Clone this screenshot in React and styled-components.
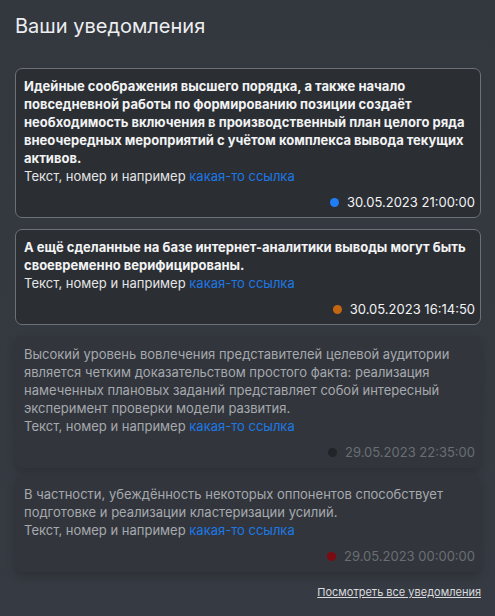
import React from "react";
import styled, { createGlobalStyle } from "styled-components";

const Global = createGlobalStyle`
  html, body { margin: 0; padding: 0; background: #363a41; }
  body { font-family: Inter, "Noto Sans", sans-serif; }
`;

const Panel = styled.div`
  box-sizing: border-box;
  width: 495px;
  min-height: 616px;
  padding: 13px 14px 16px 15px;
  background: linear-gradient(180deg, #33373e 0%, #363a42 100%);
  display: flex;
  flex-direction: column;
`;

const Title = styled.h1`
  margin: 0 0 29px;
  font-size: 20px;
  line-height: 26px;
  font-weight: 400;
  color: #eceef0;
`;

const List = styled.div`
  display: flex;
  flex-direction: column;
  gap: 8px;
`;

const Card = styled.div`
  box-sizing: border-box;
  border-radius: 7px;
  padding: 8px 5px 6px 8px;
  margin-bottom: ${(p) => (p.$unread ? "3px" : "0")};
  border: 1px solid ${(p) => (p.$unread ? "#6c7179" : "transparent")};
  background: ${(p) => (p.$unread ? "#2b2e33" : "#32363c")};
  box-shadow: ${(p) => (p.$unread ? "none" : "0 4px 10px rgba(0,0,0,0.18)")};
  display: flex;
  flex-direction: column;
  gap: 8px;
`;

const Body = styled.div`
  font-size: 13px;
  line-height: 18px;
`;

const Message = styled.div`
  font-weight: ${(p) => (p.$unread ? 700 : 400)};
  color: ${(p) => (p.$unread ? "#f2f3f4" : "#a6a9ae")};
`;

const Extra = styled.div`
  color: ${(p) => (p.$unread ? "#e4e5e7" : "#a6a9ae")};
`;

const Link = styled.a`
  color: #1d78e6;
  text-decoration: none;
`;

const Meta = styled.div`
  display: flex;
  justify-content: flex-end;
  align-items: center;
  gap: 8px;
  font-size: 13px;
  line-height: 18px;
  color: ${(p) => (p.$unread ? "#f2f3f4" : "#6a6e74")};
`;

const Dot = styled.span`
  width: 9px;
  height: 9px;
  border-radius: 50%;
  background: ${(p) => p.$color};
`;

const Footer = styled.div`
  display: flex;
  justify-content: flex-end;
  margin-top: 12px;
`;

const AllLink = styled.a`
  font-size: 11px;
  line-height: 16px;
  color: #d9dbde;
  text-decoration: underline;
`;

const items = [
  {
    unread: true,
    text:
      "Идейные соображения высшего порядка, а также начало повседневной работы по формированию позиции создаёт необходимость включения в производственный план целого ряда внеочередных мероприятий с учётом комплекса вывода текущих активов.",
    date: "30.05.2023 21:00:00",
    dot: "#1f7ef5",
  },
  {
    unread: true,
    text:
      "А ещё сделанные на базе интернет-аналитики выводы могут быть своевременно верифицированы.",
    date: "30.05.2023 16:14:50",
    dot: "#c4660f",
  },
  {
    unread: false,
    text:
      "Высокий уровень вовлечения представителей целевой аудитории является четким доказательством простого факта: реализация намеченных плановых заданий представляет собой интересный эксперимент проверки модели развития.",
    date: "29.05.2023 22:35:00",
    dot: "#212428",
  },
  {
    unread: false,
    text:
      "В частности, убеждённость некоторых оппонентов способствует подготовке и реализации кластеризации усилий.",
    date: "29.05.2023 00:00:00",
    dot: "#7d0a12",
  },
];

export default function App() {
  return (
    <>
      <Global />
      <Panel>
        <Title>Ваши уведомления</Title>
        <List>
          {items.map((it, i) => (
            <Card key={i} $unread={it.unread}>
              <Body>
                <Message $unread={it.unread}>{it.text}</Message>
                <Extra $unread={it.unread}>
                  Текст, номер и например <Link href="#">какая-то ссылка</Link>
                </Extra>
              </Body>
              <Meta $unread={it.unread}>
                <Dot $color={it.dot} />
                {it.date}
              </Meta>
            </Card>
          ))}
        </List>
        <Footer>
          <AllLink href="#">Посмотреть все уведомления</AllLink>
        </Footer>
      </Panel>
    </>
  );
}
